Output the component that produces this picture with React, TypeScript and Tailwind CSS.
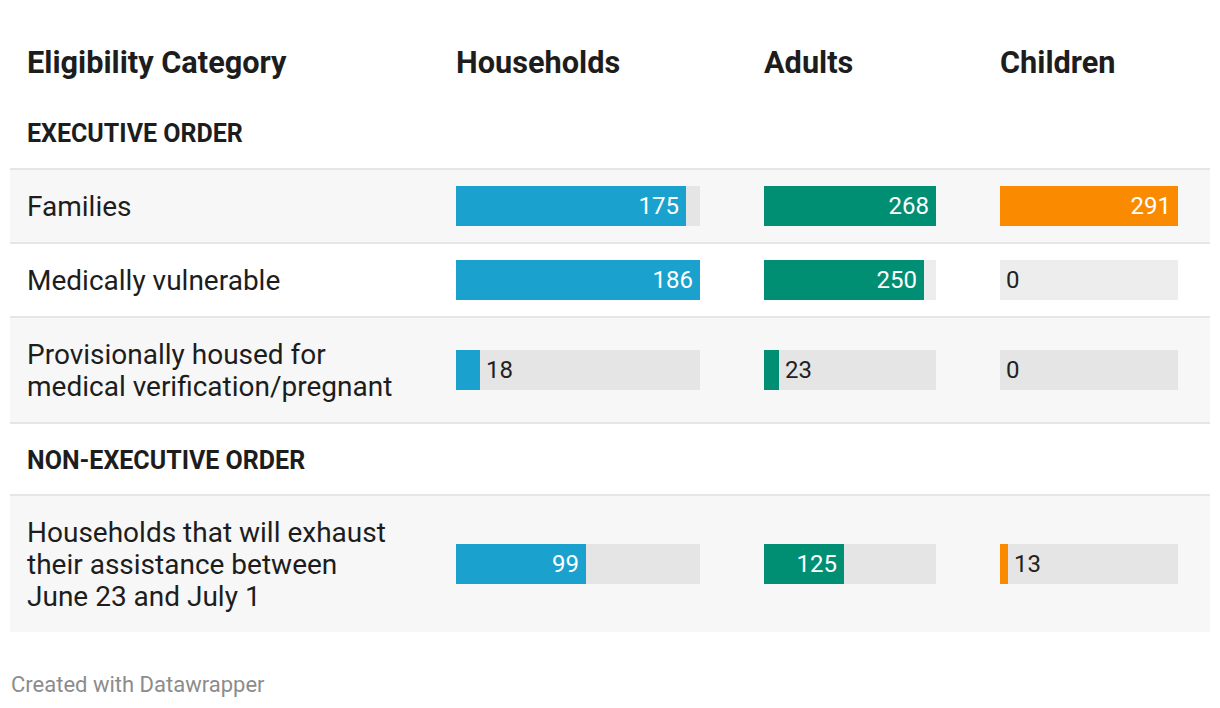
const BLUE = "bg-[#1aa1cd]";
const GREEN = "bg-[#008f73]";
const ORANGE = "bg-[#fa8b00]";

interface BarProps {
  value: number;
  max: number;
  width: number;
  color: string;
}

function Bar({ value, max, width, color }: BarProps) {
  const fill = Math.round((value / max) * width);
  const inside = fill > 60;
  return (
    <div
      className="relative h-[40px] bg-[rgba(0,0,0,0.07)] flex items-center"
      style={{ width }}
    >
      <div className={`h-full ${color} flex items-center justify-end`} style={{ width: fill }}>
        {inside && <span className="pr-[7px] text-white text-[24px] leading-none">{value}</span>}
      </div>
      {!inside && <span className="pl-[6px] text-[#222] text-[24px] leading-none">{value}</span>}
    </div>
  );
}

interface Row {
  label: string[];
  h: number;
  a: number;
  c: number;
  shaded: boolean;
  border: boolean;
  height: string;
}

const grid = "grid grid-cols-[429px_308px_236px_227px] items-center";

function DataRow({ row }: { row: Row }) {
  return (
    <div
      className={`${grid} ${row.height} ${row.shaded ? "bg-[#f7f7f7]" : "bg-white"} ${
        row.border ? "border-b-2 border-[#e6e6e6]" : ""
      }`}
    >
      <div className="pl-[17px] pt-[2px] text-[28px] leading-[32px] text-[#1d1d1d]">
        {row.label.map((l) => (
          <div key={l}>{l}</div>
        ))}
      </div>
      <div className="pl-[17px]">
        <Bar value={row.h} max={186} width={244} color={BLUE} />
      </div>
      <div className="pl-[17px]">
        <Bar value={row.a} max={268} width={172} color={GREEN} />
      </div>
      <div className="pl-[17px]">
        <Bar value={row.c} max={291} width={178} color={ORANGE} />
      </div>
    </div>
  );
}

function Section({ title, height }: { title: string; height: string }) {
  return (
    <div className={`${height} flex items-center border-b-2 border-[#e6e6e6] pl-[17px] pt-[3px]`}>
      <span className="text-[25px] font-bold text-[#1d1d1d]">{title}</span>
    </div>
  );
}

export default function App() {
  const executive: Row[] = [
    { label: ["Families"], h: 175, a: 268, c: 291, shaded: true, border: true, height: "h-[74px]" },
    { label: ["Medically vulnerable"], h: 186, a: 250, c: 0, shaded: false, border: true, height: "h-[74px]" },
    {
      label: ["Provisionally housed for", "medical verification/pregnant"],
      h: 18,
      a: 23,
      c: 0,
      shaded: true,
      border: true,
      height: "h-[106px]",
    },
  ];
  const nonExecutive: Row = {
    label: ["Households that will exhaust", "their assistance between", "June 23 and July 1"],
    h: 99,
    a: 125,
    c: 13,
    shaded: true,
    border: false,
    height: "h-[136px]",
  };

  return (
    <div className="w-[1220px] h-[708px] bg-white px-[10px] pt-[29px] font-['Roboto',sans-serif]">
      <div className={`${grid} h-[68px]`}>
        {["Eligibility Category", "Households", "Adults", "Children"].map((h) => (
          <div key={h} className="pl-[17px] text-[30.7px] leading-[36px] font-bold text-[#1d1d1d]">
            {h}
          </div>
        ))}
      </div>
      <Section title="EXECUTIVE ORDER" height="h-[73px]" />
      {executive.map((r) => (
        <DataRow key={r.label[0]} row={r} />
      ))}
      <Section title="NON-EXECUTIVE ORDER" height="h-[72px]" />
      <DataRow row={nonExecutive} />
      <div className="mt-[40px] pl-[1px] text-[22px] leading-[26px] text-[#8c8c8c]">
        Created with Datawrapper
      </div>
    </div>
  );
}
